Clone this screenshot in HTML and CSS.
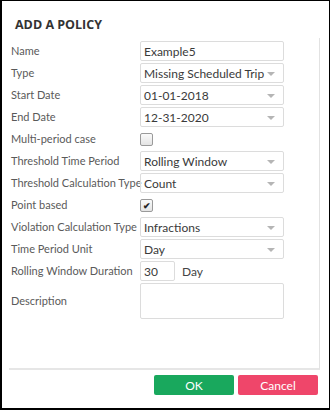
FILE: index.html
```html
<!DOCTYPE html>
<html lang="en">
<head>
<meta charset="UTF-8">
<title>Add a policy</title>
<link rel="stylesheet" href="styles.css">
</head>
<body>
<div class="dialog">
  <h2 class="title">ADD A POLICY</h2>
  <div class="content">
    <div class="form">
      <label>Name</label>
      <div class="field box">Example5</div>

      <label>Type</label>
      <div class="field box select">Missing Scheduled Trip<span class="arrow"></span></div>

      <label>Start Date</label>
      <div class="field box select">01-01-2018<span class="arrow"></span></div>

      <label>End Date</label>
      <div class="field box select">12-31-2020<span class="arrow"></span></div>

      <label>Multi-period case</label>
      <div class="field"><span class="check"></span></div>

      <label>Threshold Time Period</label>
      <div class="field box select">Rolling Window<span class="arrow"></span></div>

      <label>Threshold Calculation Type</label>
      <div class="field box select">Count<span class="arrow"></span></div>

      <label>Point based</label>
      <div class="field"><span class="check checked">&#10004;</span></div>

      <label>Violation Calculation Type</label>
      <div class="field box select">Infractions<span class="arrow"></span></div>

      <label>Time Period Unit</label>
      <div class="field box select">Day<span class="arrow"></span></div>

      <label>Rolling Window Duration</label>
      <div class="field inline"><span class="box small">30</span><span class="unit">Day</span></div>

      <label class="top">Description</label>
      <div class="field box area"></div>
    </div>
  </div>
  <div class="buttons">
    <button class="btn ok">OK</button>
    <button class="btn cancel">Cancel</button>
  </div>
</div>
</body>
</html>
```

FILE: styles.css
```css
body { margin: 0; font-family: Lato, "Open Sans", sans-serif; color: #444; }
.dialog {
  width: 330px;
  height: 410px;
  box-sizing: border-box;
  border: 1px solid #000;
  border-left-width: 2px;
  border-bottom-width: 2px;
  background: #fff;
}
.title {
  margin: 0;
  padding: 15px 0 0 13px;
  height: 22px;
  font-family: "Open Sans", sans-serif;
  font-size: 12.5px;
  font-weight: bold;
  color: #333;
  line-height: 18px;
}
.content {
  margin-left: 7px;
  width: 311px;
  height: 332px;
  box-sizing: border-box;
  border-right: 1px solid #e2e2e2;
  border-bottom: 2px solid #e6e6e6;
  padding: 3px 0 0 2px;
}
.form {
  display: grid;
  grid-template-columns: 129px 144px;
  grid-auto-rows: 20px;
  row-gap: 2px;
}
.form label {
  font-size: 11px;
  line-height: 20px;
  white-space: nowrap;
  color: #5a5a5a;
}
.form label.top { line-height: 36px; }
.field {
  display: flex;
  align-items: center;
  font-size: 12px;
  color: #3a3a3a;
  white-space: nowrap;
}
.box {
  box-sizing: border-box;
  border: 1px solid #dcdcdc;
  border-radius: 2px;
  height: 20px;
  padding-left: 3px;
}
.select { position: relative; }
.arrow {
  position: absolute;
  right: 8px;
  top: 8px;
  border-left: 4px solid transparent;
  border-right: 4px solid transparent;
  border-top: 4px solid #b5b5b5;
}
.check {
  width: 11px;
  height: 11px;
  border: 1px solid #9a9a9a;
  border-radius: 2px;
  background: linear-gradient(#fafafa, #e4e4e4);
  font-size: 9px;
  font-weight: bold;
  line-height: 11px;
  text-align: center;
  color: #222;
}
.inline { gap: 7px; }
.small {
  display: flex;
  align-items: center;
  width: 35px;
}
.unit { font-size: 12px; color: #444; }
.area { grid-row: span 2; height: 36px; }
.buttons {
  display: flex;
  justify-content: flex-end;
  gap: 4px;
  padding: 5px 11px 0 0;
}
.btn {
  width: 80px;
  height: 20px;
  border: none;
  border-radius: 2px;
  color: #fff;
  font-family: Lato, sans-serif;
  font-size: 12px;
  padding: 0;
}
.ok { background: #19a85d; }
.cancel { background: #ef466a; }
```
